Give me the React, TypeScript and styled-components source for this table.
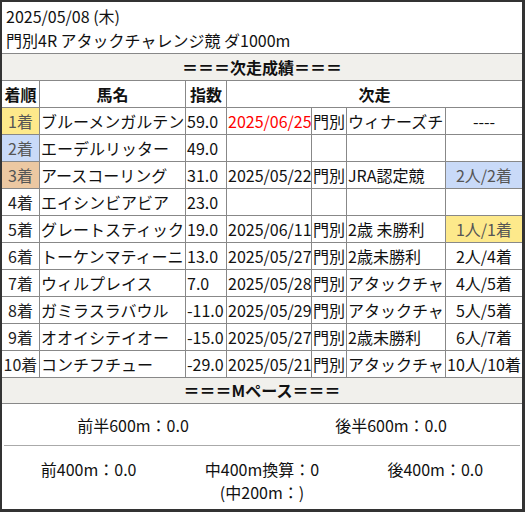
import React from "react";
import styled, { createGlobalStyle } from "styled-components";

const Global = createGlobalStyle`
  html, body { margin: 0; padding: 0; background: #fff; }
  body { font-family: "Noto Sans CJK JP", "Noto Sans", sans-serif; }
  * { box-sizing: border-box; }
`;

const Frame = styled.div`
  width: 525px;
  height: 512px;
  border-style: solid;
  border-color: #333;
  border-width: 2px 3px 3px 2px;
  background: #fff;
  color: #111;
  font-size: 16px;
  display: flex;
  flex-direction: column;
  overflow: hidden;
`;

const Title = styled.div`
  padding: 2px 4px 1px;
  line-height: 24px;
  border-bottom: 1px solid #888;
`;

const cols = "38px 146px 41px 85px 35px 99px 76px";

const SectionHead = styled.div<{ $h: number }>`
  height: ${(p) => p.$h}px;
  background: #f1f0ec;
  border-bottom: 1px solid #888;
  font-weight: 700;
  text-align: center;
  line-height: ${(p) => p.$h - 1}px;
`;

const Row = styled.div`
  display: grid;
  grid-template-columns: ${cols};
  height: 27px;
  border-bottom: 1px solid #888;
`;

const Cell = styled.div<{ $align?: string; $bg?: string; $color?: string; $bold?: boolean; $span?: number; $last?: boolean }>`
  grid-column: span ${(p) => p.$span ?? 1};
  border-right: ${(p) => (p.$last ? "none" : "1px solid #888")};
  background: ${(p) => p.$bg ?? "transparent"};
  color: ${(p) => p.$color ?? "#111"};
  font-weight: ${(p) => (p.$bold ? 700 : 400)};
  text-align: ${(p) => p.$align ?? "left"};
  line-height: 26px;
  padding: 0 1px;
  white-space: nowrap;
  overflow: hidden;
`;

const PaceTop = styled.div`
  display: grid;
  grid-template-columns: 1fr 1fr;
  height: 42px;
  align-items: center;
  text-align: center;
  border-bottom: 1px solid #aaa;
  margin: 0 2px;
`;

const PaceBottom = styled.div`
  display: grid;
  grid-template-columns: 1fr 1fr 1fr;
  padding-top: 12px;
  text-align: center;
  line-height: 23px;
`;

type Entry = {
  rank: string;
  rankBg?: string;
  name: string;
  idx: string;
  date?: string;
  dateRed?: boolean;
  place?: string;
  race?: string;
  result?: string;
  resBg?: string;
};

const YEL = "#fde98b";
const BLU = "#c9daf8";
const TAN = "#ecc8a2";

const data: Entry[] = [
  { rank: "1着", rankBg: YEL, name: "ブルーメンガルテン", idx: "59.0", date: "2025/06/25", dateRed: true, place: "門別", race: "ウィナーズチ", result: "----" },
  { rank: "2着", rankBg: BLU, name: "エーデルリッター", idx: "49.0" },
  { rank: "3着", rankBg: TAN, name: "アースコーリング", idx: "31.0", date: "2025/05/22", place: "門別", race: "JRA認定競", result: "2人/2着", resBg: BLU },
  { rank: "4着", name: "エイシンビアビア", idx: "23.0" },
  { rank: "5着", name: "グレートスティック", idx: "19.0", date: "2025/06/11", place: "門別", race: "2歳 未勝利", result: "1人/1着", resBg: YEL },
  { rank: "6着", name: "トーケンマティーニ", idx: "13.0", date: "2025/05/27", place: "門別", race: "2歳未勝利", result: "2人/4着" },
  { rank: "7着", name: "ウィルプレイス", idx: "7.0", date: "2025/05/28", place: "門別", race: "アタックチャ", result: "4人/5着" },
  { rank: "8着", name: "ガミラスラバウル", idx: "-11.0", date: "2025/05/29", place: "門別", race: "アタックチャ", result: "5人/5着" },
  { rank: "9着", name: "オオイシテイオー", idx: "-15.0", date: "2025/05/27", place: "門別", race: "2歳未勝利", result: "6人/7着" },
  { rank: "10着", name: "コンチフチュー", idx: "-29.0", date: "2025/05/21", place: "門別", race: "アタックチャ", result: "10人/10着" },
];

export default function App() {
  return (
    <>
      <Global />
      <Frame>
        <Title>
          <div>2025/05/08 (木)</div>
          <div>門別4R アタックチャレンジ競 ダ1000m</div>
        </Title>
        <SectionHead $h={27}>＝＝＝次走成績＝＝＝</SectionHead>
        <Row>
          <Cell $bold $align="center">着順</Cell>
          <Cell $bold $align="center">馬名</Cell>
          <Cell $bold $align="center">指数</Cell>
          <Cell $bold $align="center" $span={4} $last>次走</Cell>
        </Row>
        {data.map((d) => (
          <Row key={d.rank}>
            <Cell $align="center" $bg={d.rankBg} $color={d.rankBg ? "#555" : "#222"}>{d.rank}</Cell>
            <Cell>{d.name}</Cell>
            <Cell>{d.idx}</Cell>
            <Cell $color={d.dateRed ? "#f00" : "#111"}>{d.date ?? ""}</Cell>
            <Cell>{d.place ?? ""}</Cell>
            <Cell>{d.race ?? ""}</Cell>
            <Cell $align="center" $last $bg={d.resBg} $color={d.resBg ? "#555" : "#111"}>{d.result ?? ""}</Cell>
          </Row>
        ))}
        <SectionHead $h={26}>＝＝＝Mペース＝＝＝</SectionHead>
        <PaceTop>
          <div>前半600m：0.0</div>
          <div>後半600m：0.0</div>
        </PaceTop>
        <PaceBottom>
          <div>前400m：0.0</div>
          <div>
            中400m換算：0
            <br />
            (中200m：)
          </div>
          <div>後400m：0.0</div>
        </PaceBottom>
      </Frame>
    </>
  );
}
